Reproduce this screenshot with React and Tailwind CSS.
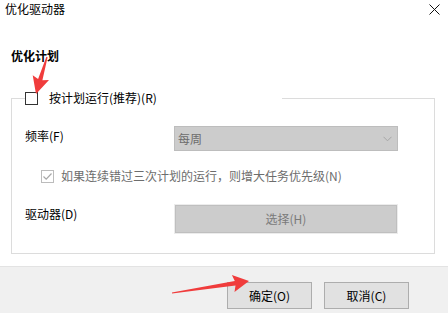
import React from "react";

function arrowPoints([tx, ty], [px, py], headLen, headW, tailW, neckW) {
  const dx = px - tx, dy = py - ty;
  const L = Math.hypot(dx, dy);
  const ux = dx / L, uy = dy / L;
  const nx = -uy, ny = ux;
  const bx = px - ux * headLen, by = py - uy * headLen;
  const pts = [
    [tx + nx * tailW / 2, ty + ny * tailW / 2],
    [bx + nx * neckW / 2, by + ny * neckW / 2],
    [bx + nx * headW / 2 - ux * 2, by + ny * headW / 2 - uy * 2],
    [px, py],
    [bx - nx * headW / 2 - ux * 2, by - ny * headW / 2 - uy * 2],
    [bx - nx * neckW / 2, by - ny * neckW / 2],
    [tx - nx * tailW / 2, ty - ny * tailW / 2],
  ];
  return pts.map((p) => p.map((v) => v.toFixed(1)).join(",")).join(" ");
}

function Checkbox({ checked, disabled }) {
  return (
    <span
      className={
        "flex h-[13px] w-[13px] shrink-0 items-center justify-center border bg-white " +
        (disabled ? "border-[#bcbcbc]" : "border-[#333333]")
      }
    >
      {checked && (
        <svg width="11" height="11" viewBox="0 0 11 11">
          <path d="M1.5 5.5 L4.2 8.2 L9.5 2.5" fill="none" stroke="#a8a8a8" strokeWidth="1.2" />
        </svg>
      )}
    </span>
  );
}

export default function App() {
  return (
    <div
      className="relative flex h-[313px] w-[448px] flex-col overflow-hidden bg-white text-[12px] text-black"
      style={{ fontFamily: '"Noto Sans CJK SC", "Noto Sans", sans-serif' }}
    >
      {/* title bar */}
      <div className="flex h-[17px] items-center justify-between pl-[5px] pr-[8px] leading-[17px]">
        <span>优化驱动器</span>
        <svg width="11" height="11" viewBox="0 0 11 11" className="mt-[1px]">
          <path d="M0.5 0.5 L10.5 10.5 M10.5 0.5 L0.5 10.5" stroke="#111" strokeWidth="1" />
        </svg>
      </div>

      <div className="mt-[31px] pl-[11px] font-bold leading-[16px]">优化计划</div>

      <fieldset className="mx-[13px] ml-[11px] mt-[26px] w-[424px] border border-[#dcdcdc] pb-[20px]">
        <legend className="ml-[13px] flex w-[257px] items-center gap-[11px] leading-[16px]">
          <Checkbox />
          <span>按计划运行(推荐)(R)</span>
        </legend>

        <div className="mt-[20px] flex items-start pl-[13px]">
          <span className="mt-[2px] w-[149px] leading-[16px]">频率(F)</span>
          <div className="flex h-[25px] w-[224px] items-center justify-between border border-[#bdbdbd] bg-[#cccccc] pl-[3px] pr-[5px] text-[#6d6d6d]">
            <span className="leading-[16px]">每周</span>
            <svg width="9" height="6" viewBox="0 0 9 6">
              <path d="M0.5 0.8 L4.5 4.8 L8.5 0.8" fill="none" stroke="#a6a6a6" strokeWidth="1" />
            </svg>
          </div>
        </div>

        <div className="mt-[17px] flex items-center gap-[7px] pl-[29px] leading-[16px] text-[#6d6d6d]">
          <Checkbox checked disabled />
          <span>如果连续错过三次计划的运行，则增大任务优先级(N)</span>
        </div>

        <div className="mt-[21px] flex items-start pl-[13px]">
          <span className="mt-[1px] w-[150px] leading-[16px]">驱动器(D)</span>
          <div className="flex h-[28px] w-[222px] items-center justify-center border border-[#bfbfbf] bg-[#cccccc] leading-[16px] text-[#7a7a7a] outline outline-1 outline-[#ececec]">
            选择(H)
          </div>
        </div>
      </fieldset>

      <div className="mt-auto flex h-[47px] justify-end gap-[12px] border-t border-[#e3e3e3] bg-[#f0f0f0] pr-[39px] pt-[15px]">
        <button className="h-[27px] w-[85px] border border-[#adadad] bg-[#e1e1e1] leading-[16px]">确定(O)</button>
        <button className="h-[27px] w-[85px] border border-[#adadad] bg-[#e1e1e1] leading-[16px]">取消(C)</button>
      </div>

      <svg className="pointer-events-none absolute left-0 top-0" width="448" height="313">
        <polygon points={arrowPoints([47, 57], [36, 94], 15, 17, 1.2, 4.5)} fill="#f03c3c" />
        <polygon points={arrowPoints([172, 293], [249, 281], 14, 17, 1.2, 4.5)} fill="#f03c3c" />
      </svg>
    </div>
  );
}
